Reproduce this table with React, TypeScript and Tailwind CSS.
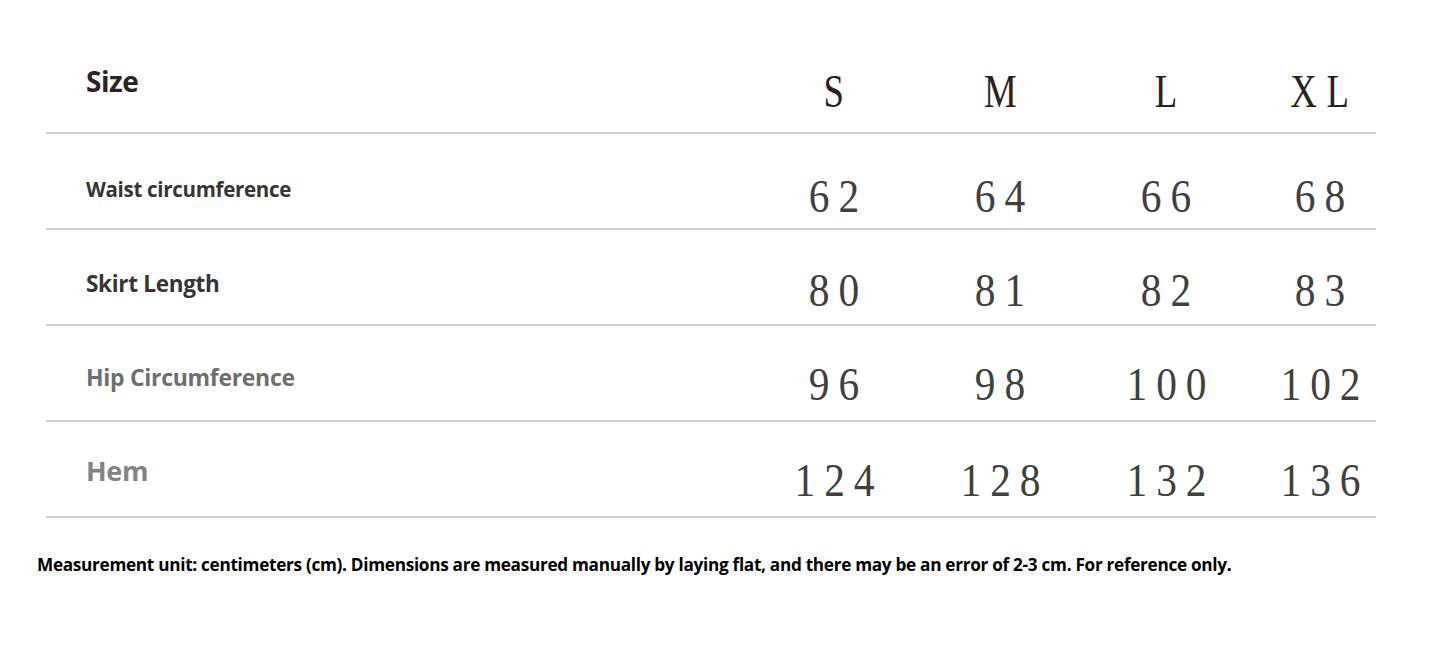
const sizes = ['S', 'M', 'L', 'XL'];

const rows = [
  { label: 'Waist circumference', values: ['62', '64', '66', '68'], color: 'text-[#3a3331]', size: 'text-[20.5px] pt-[16px]', num: 'pt-[32px]' },
  { label: 'Skirt Length', values: ['80', '81', '82', '83'], color: 'text-[#3a3331]', size: 'text-[22.5px] pt-[14px]', num: 'pt-[28px]' },
  { label: 'Hip Circumference', values: ['96', '98', '100', '102'], color: 'text-[#6e6e6e]', size: 'text-[23px] pt-[8px]', num: 'pt-[24px]' },
  { label: 'Hem', values: ['124', '128', '132', '136'], color: 'text-[#838383]', size: 'text-[27px] pt-[4px]', num: 'pt-[24px]' },
];

const grid = 'grid grid-cols-[704px_168px_164px_168px_126px] w-[1330px] h-[96px] border-b-2 border-[#cfcfcf]';

export default function App() {
  return (
    <div className="w-[1445px] h-[660px] bg-white pt-[38px] font-['Open_Sans',sans-serif]">
      <div className="ml-[46px]">
        {/* Header */}
        <div className={grid}>
          <div className="flex items-center pl-[40px] pb-[8px] text-[28px] font-bold tracking-[-0.5px] text-[#2b2222]">
            Size
          </div>
          {sizes.map((s, i) => (
            <div
              key={s}
              className={`flex items-center justify-center pt-[12px] font-['Liberation_Serif',serif] text-[46px] text-[#2a2222] ${i === 3 ? 'pl-[14px]' : ''}`}
            >
              <span className={`inline-block scale-x-[0.8] ${i === 3 ? 'tracking-[12px] pl-[12px]' : ''}`}>{s}</span>
            </div>
          ))}
        </div>

        {/* Rows */}
        {rows.map((r) => (
          <div key={r.label} className={grid}>
            <div className={`flex items-center pl-[40px] font-bold tracking-[-0.3px] ${r.size} ${r.color}`}>
              {r.label}
            </div>
            {r.values.map((v, i) => (
              <div
                key={i}
                className={`flex items-center justify-center ${r.num} font-['Liberation_Serif',serif] text-[46px] leading-none text-[#404040] ${i === 3 ? 'pl-[14px]' : ''}`}
              >
                <span className="inline-block scale-x-[0.9] tracking-[10px] pl-[10px]">{v}</span>
              </div>
            ))}
          </div>
        ))}
      </div>

      <p className="ml-[37px] mt-[34px] text-[17.2px] font-bold tracking-[-0.3px] text-black">
        Measurement unit: centimeters (cm). Dimensions are measured manually by laying flat, and there may be an error of 2-3 cm. For reference only.
      </p>
    </div>
  );
}
